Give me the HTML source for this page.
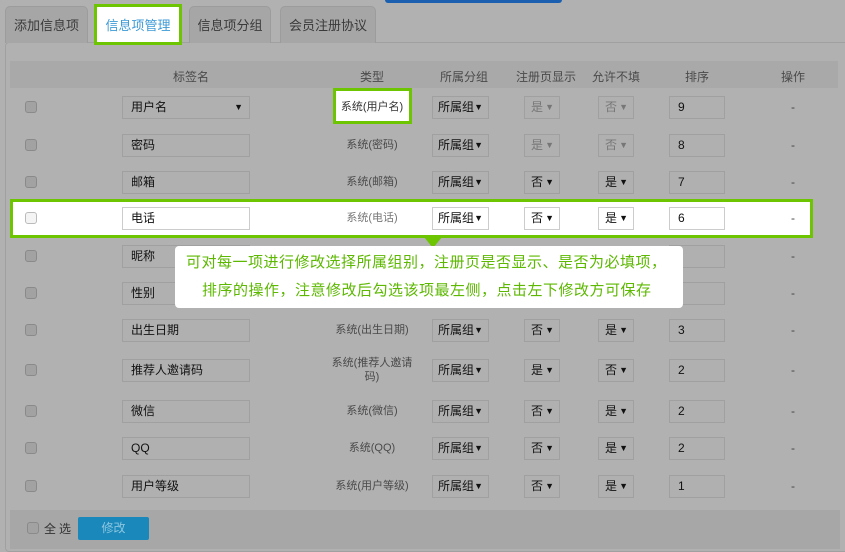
<!DOCTYPE html>
<html><head><meta charset="utf-8"><style>
*{margin:0;padding:0;box-sizing:border-box}
body{width:845px;height:549px;overflow:hidden;background:#b1b1b1;font-family:"Liberation Sans","Noto Sans CJK SC",sans-serif;position:relative;font-size:12px;color:#222}
.a{position:absolute}
.tab{position:absolute;top:6px;height:37px;background:#a6a6a6;border:1px solid #9c9c9c;border-bottom:none;border-radius:5px 5px 0 0;font-size:13px;color:#3a3a3a;text-align:center;line-height:38px}
.panel{position:absolute;left:5px;top:42px;width:845px;height:510px;border:1px solid #a0a0a0;border-radius:4px;background:#b1b1b1}
.hdr{position:absolute;left:10px;top:61px;width:828px;height:27px;background:#a9a9a9;color:#4a4a4a;font-size:12px}
.hdr span{position:absolute;top:7px;transform:translateX(-50%)}
.cb{position:absolute;left:25px;width:12px;height:12px;border:1px solid #8a8a8a;border-radius:3px;background:#a2a2a2}
.inp{position:absolute;height:23px;border:1px solid #a0a0a0;background:#b0b0b0;font-size:12px;line-height:21px;padding-left:8px;color:#111}
.sel{position:absolute;height:23px;border:1px solid #a0a0a0;background:#b0b0b0;font-size:12px;line-height:21px;padding-left:6px;color:#111}
.sel i{font-style:normal;font-size:9px;position:absolute;right:5px;top:0}
.g{padding-left:5px}
.dis{color:#777}
.typ{position:absolute;width:100px;margin-left:-50px;text-align:center;color:#4a4a4a;font-size:11px;line-height:14px}
.op{position:absolute;left:791px;color:#444}
.white .inp,.white .sel{background:#fff;border-color:#ccc}
</style></head><body>
<div class="a" style="left:385px;top:0;width:177px;height:3px;background:#1a5fb0;border-radius:0 0 4px 4px"></div>
<div class="panel"></div>
<div class="tab" style="left:5px;width:83px">添加信息项</div>
<div class="tab" style="left:94px;top:4px;width:88px;height:41px;background:#fff;border:3px solid #6dc400;color:#3c9ad6;line-height:38px;border-radius:0">信息项管理</div>
<div class="tab" style="left:189px;width:82px">信息项分组</div>
<div class="tab" style="left:280px;width:96px">会员注册协议</div>
<div class="hdr">
<span style="left:181px">标签名</span><span style="left:362px">类型</span><span style="left:454px">所属分组</span><span style="left:536px">注册页显示</span><span style="left:606px">允许不填</span><span style="left:687px">排序</span><span style="left:783px">操作</span>
</div>

<div class="a" style="left:333px;top:88px;width:79px;height:36px;background:#fff;border:3px solid #6dc400"></div>
<div class="a" style="left:10px;top:199px;width:803px;height:39px;background:#fff;border:3px solid #6dc400"></div>

<div class="cb" style="top:101px"></div><div class="inp" style="left:122px;top:96px;width:128px">用户名<span style="position:absolute;right:6px;font-size:9px">▼</span></div><div class="typ" style="left:372px;top:100px;color:#333">系统(用户名)</div><div class="sel g" style="left:432px;top:96px;width:57px">所属组<i>▼</i></div><div class="sel dis" style="left:524px;top:96px;width:36px">是<i>▼</i></div><div class="sel dis" style="left:598px;top:96px;width:36px">否<i>▼</i></div><div class="inp" style="left:669px;top:96px;width:56px">9</div><div class="op" style="top:100px">-</div>

<div class="cb" style="top:139px"></div><div class="inp" style="left:122px;top:134px;width:128px">密码</div><div class="typ" style="left:372px;top:138px">系统(密码)</div><div class="sel g" style="left:432px;top:134px;width:57px">所属组<i>▼</i></div><div class="sel dis" style="left:524px;top:134px;width:36px">是<i>▼</i></div><div class="sel dis" style="left:598px;top:134px;width:36px">否<i>▼</i></div><div class="inp" style="left:669px;top:134px;width:56px">8</div><div class="op" style="top:138px">-</div>

<div class="cb" style="top:176px"></div><div class="inp" style="left:122px;top:171px;width:128px">邮箱</div><div class="typ" style="left:372px;top:175px">系统(邮箱)</div><div class="sel g" style="left:432px;top:171px;width:57px">所属组<i>▼</i></div><div class="sel" style="left:524px;top:171px;width:36px">否<i>▼</i></div><div class="sel" style="left:598px;top:171px;width:36px">是<i>▼</i></div><div class="inp" style="left:669px;top:171px;width:56px">7</div><div class="op" style="top:175px">-</div>

<div class="white"><div class="cb" style="top:212px;background:#f4f4f4;border-color:#bbb"></div><div class="inp" style="left:122px;top:207px;width:128px">电话</div><div class="typ" style="left:372px;top:211px;color:#777">系统(电话)</div><div class="sel g" style="left:432px;top:207px;width:57px">所属组<i>▼</i></div><div class="sel" style="left:524px;top:207px;width:36px">否<i>▼</i></div><div class="sel" style="left:598px;top:207px;width:36px">是<i>▼</i></div><div class="inp" style="left:669px;top:207px;width:56px">6</div><div class="op" style="top:211px">-</div></div>

<div class="cb" style="top:250px"></div><div class="inp" style="left:122px;top:245px;width:128px">昵称</div><div class="inp" style="left:669px;top:245px;width:56px"></div><div class="op" style="top:249px">-</div>
<div class="cb" style="top:287px"></div><div class="inp" style="left:122px;top:282px;width:128px">性别</div><div class="inp" style="left:669px;top:282px;width:56px"></div><div class="op" style="top:286px">-</div>

<div class="cb" style="top:324px"></div><div class="inp" style="left:122px;top:319px;width:128px">出生日期</div><div class="typ" style="left:372px;top:323px">系统(出生日期)</div><div class="sel g" style="left:432px;top:319px;width:57px">所属组<i>▼</i></div><div class="sel" style="left:524px;top:319px;width:36px">否<i>▼</i></div><div class="sel" style="left:598px;top:319px;width:36px">是<i>▼</i></div><div class="inp" style="left:669px;top:319px;width:56px">3</div><div class="op" style="top:323px">-</div>

<div class="cb" style="top:364px"></div><div class="inp" style="left:122px;top:359px;width:128px">推荐人邀请码</div><div class="typ" style="left:372px;top:356px;width:84px;margin-left:-42px">系统(推荐人邀请码)</div><div class="sel g" style="left:432px;top:359px;width:57px">所属组<i>▼</i></div><div class="sel" style="left:524px;top:359px;width:36px">是<i>▼</i></div><div class="sel" style="left:598px;top:359px;width:36px">否<i>▼</i></div><div class="inp" style="left:669px;top:359px;width:56px">2</div><div class="op" style="top:363px">-</div>

<div class="cb" style="top:405px"></div><div class="inp" style="left:122px;top:400px;width:128px">微信</div><div class="typ" style="left:372px;top:404px">系统(微信)</div><div class="sel g" style="left:432px;top:400px;width:57px">所属组<i>▼</i></div><div class="sel" style="left:524px;top:400px;width:36px">否<i>▼</i></div><div class="sel" style="left:598px;top:400px;width:36px">是<i>▼</i></div><div class="inp" style="left:669px;top:400px;width:56px">2</div><div class="op" style="top:404px">-</div>

<div class="cb" style="top:442px"></div><div class="inp" style="left:122px;top:437px;width:128px">QQ</div><div class="typ" style="left:372px;top:441px">系统(QQ)</div><div class="sel g" style="left:432px;top:437px;width:57px">所属组<i>▼</i></div><div class="sel" style="left:524px;top:437px;width:36px">否<i>▼</i></div><div class="sel" style="left:598px;top:437px;width:36px">是<i>▼</i></div><div class="inp" style="left:669px;top:437px;width:56px">2</div><div class="op" style="top:441px">-</div>

<div class="cb" style="top:480px"></div><div class="inp" style="left:122px;top:475px;width:128px">用户等级</div><div class="typ" style="left:372px;top:479px">系统(用户等级)</div><div class="sel g" style="left:432px;top:475px;width:57px">所属组<i>▼</i></div><div class="sel" style="left:524px;top:475px;width:36px">否<i>▼</i></div><div class="sel" style="left:598px;top:475px;width:36px">是<i>▼</i></div><div class="inp" style="left:669px;top:475px;width:56px">1</div><div class="op" style="top:479px">-</div>

<div class="a" style="left:10px;top:510px;width:830px;height:39px;background:#a7a7a7"></div>
<div class="cb" style="left:27px;top:522px;width:12px;height:12px"></div>
<div class="a" style="left:44px;top:520px;font-size:12px;color:#333;letter-spacing:3px">全选</div>
<div class="a" style="left:78px;top:517px;width:71px;height:23px;background:#1a88bb;border-radius:2px;color:#8cc6e0;text-align:center;line-height:23px;font-size:12px">修改</div>

<div class="a" style="left:424px;top:237px;width:0;height:0;border-left:9px solid transparent;border-right:9px solid transparent;border-top:11px solid #6dc400"></div>
<div class="a" style="left:175px;top:246px;width:508px;height:62px;background:#fff;border-radius:4px;color:#5cb800;font-size:15px;line-height:28px;padding-top:3px;letter-spacing:0.5px;white-space:nowrap">
<div style="padding-left:11px">可对每一项进行修改选择所属组别，注册页是否显示、是否为必填项，</div>
<div style="padding-left:27px">排序的操作，注意修改后勾选该项最左侧，点击左下修改方可保存</div>
</div>
</body></html>
